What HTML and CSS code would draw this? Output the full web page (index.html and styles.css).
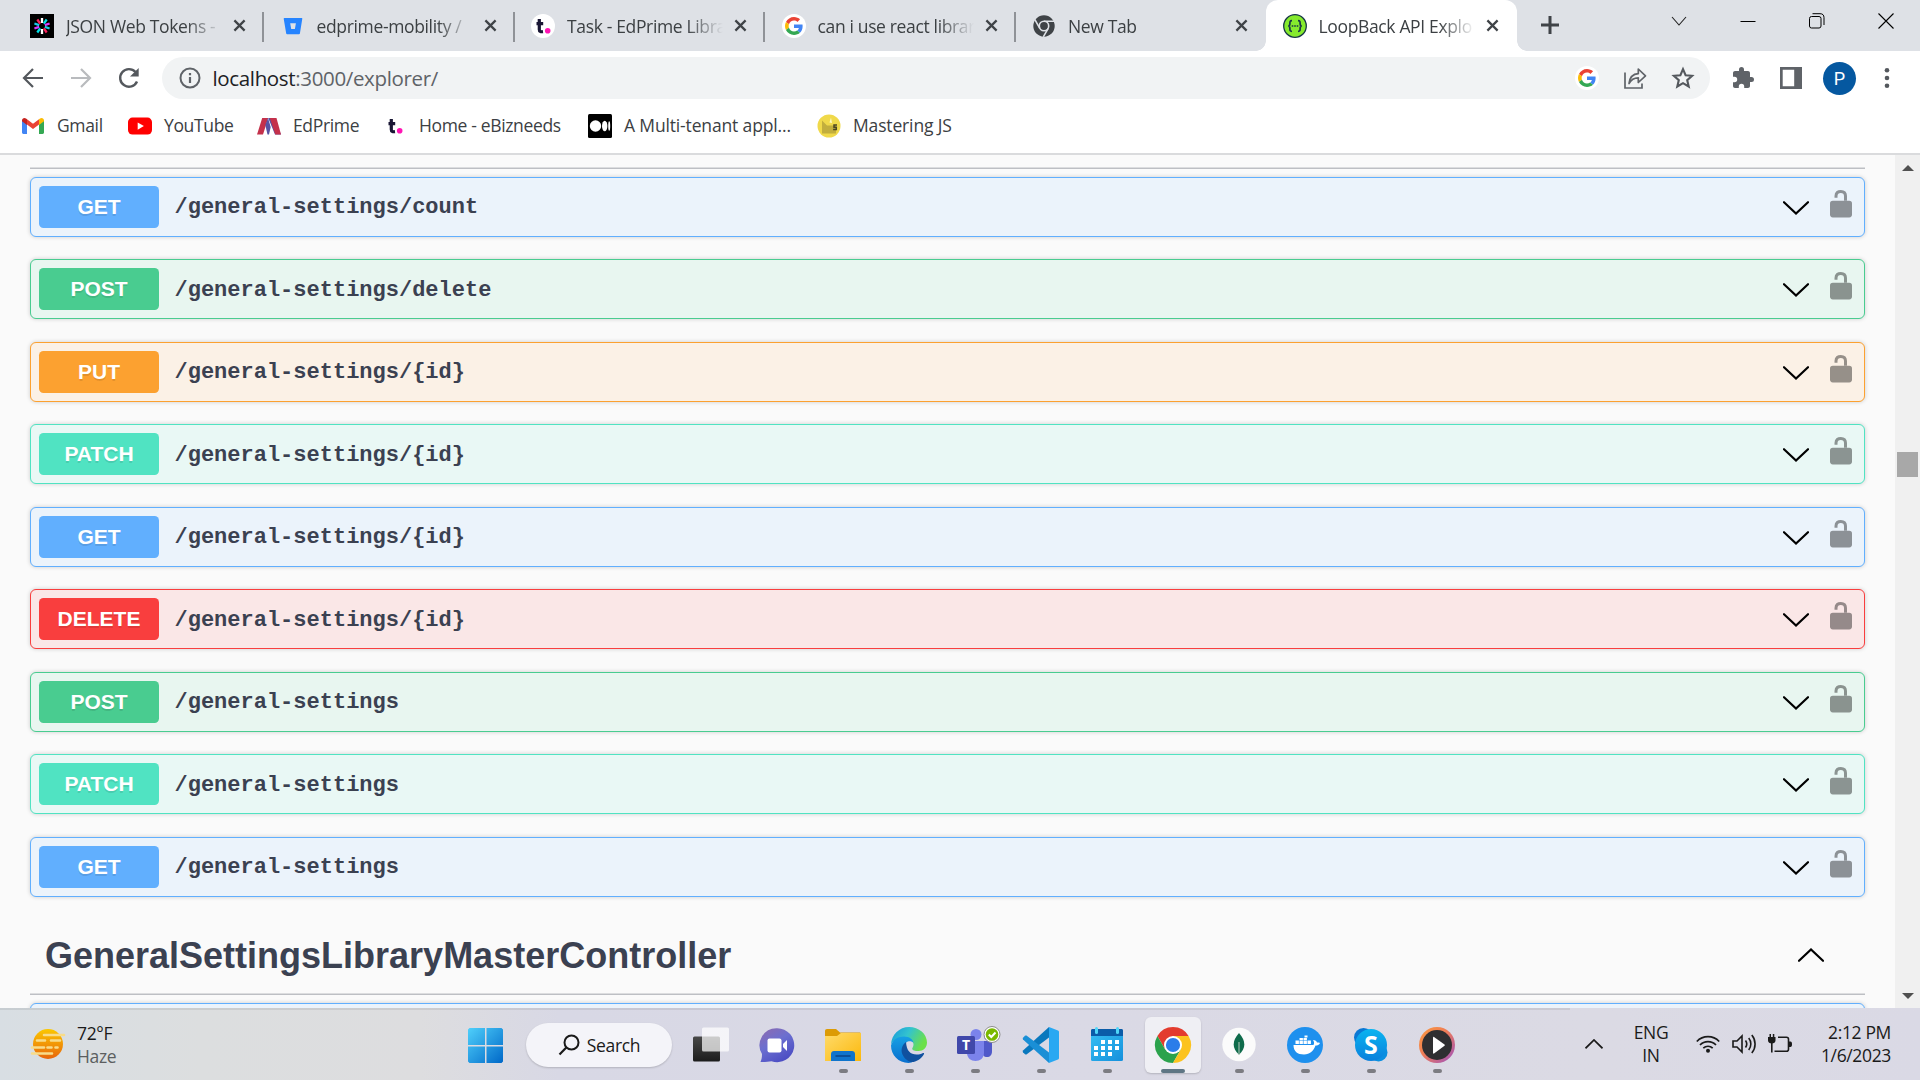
FILE: index.html
```html
<!DOCTYPE html>
<html lang="en">
<head>
<meta charset="utf-8">
<title>LoopBack API Explorer</title>
<link rel="stylesheet" href="styles.css">
</head>
<body>
<svg class="defs" width="0" height="0" aria-hidden="true">
  <defs>
    <linearGradient id="g-win" x1="0" y1="0" x2="1" y2="1"><stop offset="0" stop-color="#4fd0fb"/><stop offset="1" stop-color="#0068c8"/></linearGradient>
    <linearGradient id="g-sun" x1="0" y1="0" x2="0" y2="1"><stop offset="0" stop-color="#fbc800"/><stop offset="1" stop-color="#e8650c"/></linearGradient>
    <linearGradient id="g-dark" x1="0" y1="0" x2="0" y2="1"><stop offset="0" stop-color="#484848"/><stop offset="1" stop-color="#1c1c1c"/></linearGradient>
    <linearGradient id="g-chat" x1="0" y1="0" x2=".6" y2="1"><stop offset="0" stop-color="#8f6aae"/><stop offset=".5" stop-color="#6b6fd0"/><stop offset="1" stop-color="#4d4ec4"/></linearGradient>
    <linearGradient id="g-folder" x1="0" y1="0" x2="1" y2="1"><stop offset="0" stop-color="#ffdb6b"/><stop offset="1" stop-color="#fbb80c"/></linearGradient>
    <linearGradient id="g-edge" x1="0" y1="0" x2="1" y2=".4"><stop offset="0" stop-color="#1597dc"/><stop offset=".5" stop-color="#33c3cf"/><stop offset="1" stop-color="#6be04a"/></linearGradient>
    <linearGradient id="g-edge2" x1="0" y1="0" x2="0" y2="1"><stop offset="0" stop-color="#16a0e4"/><stop offset="1" stop-color="#0a6fce"/></linearGradient>
    <linearGradient id="g-cal" x1="0" y1="0" x2="1" y2="1"><stop offset="0" stop-color="#35bdf2"/><stop offset="1" stop-color="#1590dc"/></linearGradient>
    <linearGradient id="g-skype" x1="0" y1="0" x2="0" y2="1"><stop offset="0" stop-color="#0ab4f0"/><stop offset="1" stop-color="#0a80dc"/></linearGradient>
    <linearGradient id="g-media" x1="0" y1="0" x2="1" y2="1"><stop offset="0" stop-color="#fb9a3c"/><stop offset=".45" stop-color="#ee7b58"/><stop offset="1" stop-color="#9a4fc4"/></linearGradient>
    <symbol id="close" viewBox="0 0 14 14"><path d="M1.5 1.5l11 11M12.5 1.5l-11 11" stroke="#3f4347" stroke-width="2.4" fill="none"/></symbol>
    <symbol id="down" viewBox="0 0 26 14"><path d="M1 1.2l12 11.3L25 1.2" stroke="#000" stroke-width="2.2" fill="none" stroke-linecap="round"/></symbol>
    <symbol id="lock" viewBox="0 0 22 28"><path d="M6 7.800V6C6 2.700 8 1.500 10.800 1.500s4.700 1.500 4.700 4.500v4.800" stroke="#000" stroke-width="3" fill="none"/><rect x="0" y="10.800" width="22" height="16.600" rx="2.800"/></symbol>
    <symbol id="google" viewBox="0 0 48 48"><path fill="#EA4335" d="M24 9.500c3.540 0 6.710 1.220 9.210 3.600l6.850-6.850C35.900 2.380 30.470 0 24 0 14.620 0 6.510 5.380 2.560 13.220l7.980 6.190C12.430 13.720 17.740 9.500 24 9.500z"/><path fill="#4285F4" d="M46.980 24.550c0-1.570-.150-3.090-.380-4.550H24v9.020h12.940c-.580 2.960-2.260 5.480-4.780 7.180l7.730 6c4.510-4.180 7.090-10.360 7.090-17.650z"/><path fill="#FBBC05" d="M10.530 28.590c-.480-1.450-.760-2.990-.760-4.590s.270-3.140.760-4.590l-7.980-6.190C.920 16.460 0 20.120 0 24c0 3.880.920 7.540 2.560 10.780l7.970-6.190z"/><path fill="#34A853" d="M24 48c6.480 0 11.930-2.130 15.890-5.810l-7.730-6c-2.150 1.450-4.920 2.300-8.160 2.300-6.260 0-11.570-4.220-13.470-9.910l-7.980 6.190C6.510 42.620 14.620 48 24 48z"/></symbol>
    <symbol id="tdot" viewBox="0 0 24 24"><path d="M8.300 5v10.500c0 2 1.200 2.500 3.700 2.200M5.500 9.600h6.700" stroke="#191634" stroke-width="3.200" fill="none"/><circle cx="16.700" cy="16.800" r="2.800" fill="#ff15b4"/></symbol>
  </defs>
</svg>

<header class="browser">
  <div class="tabstrip">
    <div class="tabs">
      <div class="tab">
        <svg class="fav" viewBox="0 0 24 24"><rect width="24" height="24"/><g stroke-width="2.300"><path d="M12 4v5M12 15v5" stroke="#fff"/><path d="M16.700 5.500L13.800 9.600M10.200 14.400l-2.900 4.100" stroke="#00e0e8"/><path d="M19.600 9.500l-4.800 1.600M9.200 12.900l-4.800 1.600" stroke="#d63aff"/><path d="M19.600 14.500l-4.800-1.600M9.200 11.100L4.400 9.500" stroke="#18c8e8"/><path d="M16.700 18.500l-2.900-4.100M10.200 9.600L7.300 5.500" stroke="#fb1f5a"/></g></svg>
        <span class="title">JSON Web Tokens -</span><svg class="x"><use href="#close"/></svg>
      </div>
      <div class="tab">
        <svg class="fav" viewBox="0 0 24 24"><path d="M3.400 4h17.200c.5 0 .8.400.7.800l-2.400 14.800c-.1.500-.4.700-.9.700H6.100c-.5 0-.8-.3-.9-.7L2.700 4.800c-.1-.4.200-.8.700-.8zM9.200 9.300l1 5.700h3.700l1-5.700z" fill="#2684ff" fill-rule="evenodd"/></svg>
        <span class="title">edprime-mobility /</span><svg class="x"><use href="#close"/></svg>
      </div>
      <div class="tab">
        <svg class="fav" viewBox="0 0 24 24"><circle cx="12" cy="12" r="12" fill="#fff"/><use href="#tdot"/></svg>
        <span class="title">Task - EdPrime Libra</span><svg class="x"><use href="#close"/></svg>
      </div>
      <div class="tab">
        <svg class="fav" viewBox="0 0 24 24"><circle cx="12" cy="12" r="12" fill="#fff"/><use href="#google" x="3" y="3" width="18" height="18"/></svg>
        <span class="title">can i use react librar</span><svg class="x"><use href="#close"/></svg>
      </div>
      <div class="tab last">
        <svg class="fav" viewBox="0 0 24 24"><circle cx="12" cy="12" r="10.700" fill="#3f4347"/><circle cx="12" cy="12" r="4.700" fill="none" stroke="#dee1e6" stroke-width="1.600"/><path d="M12 7.200h10M7.800 14.400L2.900 5.700M16.200 14.400l-4.900 8.500" stroke="#dee1e6" stroke-width="1.600"/></svg>
        <span class="title">New Tab</span><svg class="x"><use href="#close"/></svg>
      </div>
      <div class="tab active">
        <svg class="fav" viewBox="0 0 24 24"><circle cx="12" cy="12" r="11.300" fill="#85ea2d" stroke="#173647" stroke-width="1.300"/><path d="M9 6.700c-2.200 0-2.100 1-2.100 2.900 0 1.500-.3 2.400-1.700 2.400 1.400 0 1.700.9 1.700 2.400 0 1.900-.1 2.900 2.100 2.900M15 6.700c2.200 0 2.100 1 2.100 2.900 0 1.500.3 2.400 1.700 2.400-1.400 0-1.700.9-1.700 2.400 0 1.900.1 2.900-2.100 2.900" fill="none" stroke="#173647" stroke-width="1.700"/><path d="M8.700 12h1.600M11.200 12h1.600M13.700 12h1.600" stroke="#173647" stroke-width="1.600"/></svg>
        <span class="title">LoopBack API Explo</span><svg class="x"><use href="#close"/></svg>
      </div>
    </div>
    <svg class="newtab" viewBox="0 0 18 18"><path d="M9 0v18M0 9h18" stroke="#3f4347" stroke-width="3"/></svg>
    <div class="winctl">
      <svg viewBox="0 0 16 16"><path d="M1 4l7 8 7-8" fill="none" stroke="#222" stroke-width="1.100"/></svg>
      <svg viewBox="0 0 16 16"><path d="M.5 8.500h15" stroke="#000"/></svg>
      <svg viewBox="0 0 16 16"><rect x=".5" y="3.500" width="11.500" height="11.500" rx="2" fill="none" stroke="#000"/><path d="M3.500.700H11a4 4 0 0 1 4 4V12" fill="none" stroke="#000"/></svg>
      <svg viewBox="0 0 16 16"><path d="M.5.500l15 15M15.500.500l-15 15" stroke="#000" stroke-width="1.100"/></svg>
    </div>
  </div>

  <div class="toolbar">
    <div class="nav">
      <svg viewBox="0 0 24 24"><path d="M22 12H3.500M12 3l-9 9 9 9" fill="none" stroke="#54585d" stroke-width="2.200"/></svg>
      <svg viewBox="0 0 24 24"><path d="M2 12h18.500M12 3l9 9-9 9" fill="none" stroke="#b9bbbe" stroke-width="2.200"/></svg>
      <svg viewBox="0 0 24 24"><path d="M20 15.500A8.800 8.800 0 1 1 18.500 6" fill="none" stroke="#54585d" stroke-width="2.400"/><path d="M21.700 2v8.500H13z" fill="#54585d"/></svg>
    </div>
    <div class="omnibox">
      <svg class="info" viewBox="0 0 22 22"><circle cx="11" cy="11" r="9.500" fill="none" stroke="#5f6368" stroke-width="2"/><path d="M11 10v6M11 6v2.200" stroke="#5f6368" stroke-width="2.200"/></svg>
      <span class="url"><b>localhost</b>:3000/explorer/</span>
      <div class="omni-icons">
        <svg viewBox="0 0 24 24"><circle cx="12" cy="12" r="12" fill="#fff"/><use href="#google" x="3" y="3" width="18" height="18"/></svg>
        <svg viewBox="0 0 24 24"><path d="M2 6.500V22h17v-4.500" fill="none" stroke="#5f6368" stroke-width="1.700"/><path d="M6 17.500c.8-6.500 4-9.500 9.300-9.800V3l7.200 6.800-7.200 6.700v-4.700c-4.300 0-7.200 1.700-9.300 5.700z" fill="none" stroke="#5f6368" stroke-width="1.700" stroke-linejoin="round"/></svg>
        <svg viewBox="0 0 24 24"><path d="M12 3.200l2.600 6 6.500.6-4.900 4.300 1.500 6.400-5.700-3.400-5.700 3.400 1.500-6.400-4.900-4.300 6.500-.6z" fill="none" stroke="#54585d" stroke-width="2.100"/></svg>
      </div>
    </div>
    <div class="actions">
      <svg viewBox="0 0 24 24"><path d="M20.500 11H19V7c0-1.100-.9-2-2-2h-4V3.500a2.500 2.500 0 0 0-5 0V5H4c-1.100 0-2 .9-2 2v3.800h1.500a2.700 2.700 0 0 1 0 5.400H2V20c0 1.100.9 2 2 2h3.800v-1.500a2.700 2.700 0 0 1 5.400 0V22H17c1.100 0 2-.9 2-2v-4h1.500a2.500 2.500 0 0 0 0-5z" fill="#5f6368"/></svg>
      <svg viewBox="0 0 24 24"><path d="M1 1h22v22H1zM3.700 3.700v16.600h11.500V3.700z" fill="#5f6368" fill-rule="evenodd"/></svg>
      <span class="avatar">P</span>
      <svg viewBox="0 0 24 24" fill="#54585d"><circle cx="12" cy="4.200" r="2.300"/><circle cx="12" cy="12" r="2.300"/><circle cx="12" cy="19.800" r="2.300"/></svg>
    </div>
  </div>

  <div class="bookmarks">
    <div class="bm"><svg viewBox="0 0 24 24"><path d="M1 6v12.500c0 .8.600 1.400 1.400 1.400H6V10z" fill="#4285f4"/><path d="M23 6v12.500c0 .8-.6 1.400-1.400 1.400H18V10z" fill="#34a853"/><path d="M6 10.500V5.200l6 4.500 6-4.500v5.300L12 15z" fill="#ea4335"/><path d="M1 6.500C1 4 3.500 3.300 5 4.500l1 .7v5.700L1 7.300z" fill="#c5221f"/><path d="M23 6.500c0-2.500-2.500-3.200-4-2l-1 .7v5.700l5-3.600z" fill="#fbbc04"/></svg><span>Gmail</span></div>
    <div class="bm"><svg viewBox="0 0 24 24"><rect y="3.600" width="24" height="17" rx="4.500" fill="#f00"/><path d="M9.700 8.500v7.200l6.200-3.600z" fill="#fff"/></svg><span>YouTube</span></div>
    <div class="bm"><svg viewBox="0 0 24 24"><path d="M0 20.500L5.200 4h6L6 20.500z" fill="#c4314b"/><path d="M8.300 11L11 4l2.700 9-1.700 7.500h-1.500z" fill="#5753a4"/><path d="M11.200 4h5.600L24 20.500h-6z" fill="#5753a4"/><path d="M12.800 4h6.700L24 20.500h-5.700z" fill="#c4314b"/></svg><span>EdPrime</span></div>
    <div class="bm"><svg viewBox="0 0 24 24"><use href="#tdot"/></svg><span>Home - eBizneeds</span></div>
    <div class="bm wide"><svg viewBox="0 0 24 24"><rect width="24" height="24" rx="1.500"/><g fill="#fff"><circle cx="7.500" cy="12" r="5.700"/><ellipse cx="16.700" cy="12" rx="2.700" ry="5.300"/><ellipse cx="21.200" cy="12" rx="1" ry="4.800"/></g></svg><span>A Multi-tenant appl...</span></div>
    <div class="bm wide"><svg viewBox="0 0 24 24"><circle cx="12" cy="12" r="11.500" fill="#f0d94a"/><path d="M5 6.500l5 5h9v8H5z" fill="#c2ae3d"/><path d="M12.500 8.500l1.500-5 1 5.500z" fill="#fff8c0"/><path d="M20 11h-3v2.200h2.300v2.300h-3.200" fill="none" stroke="#4c4624" stroke-width="1.500"/></svg><span>Mastering JS</span></div>
  </div>
</header>

<div class="viewport">
  <main class="api">
    <div class="rule"></div>
    <div class="ops">
      <div class="op get"><span class="method">GET</span><span class="path">/general-settings/count</span><svg class="chev"><use href="#down"/></svg><svg class="lock"><use href="#lock"/></svg></div>
      <div class="op post"><span class="method">POST</span><span class="path">/general-settings/delete</span><svg class="chev"><use href="#down"/></svg><svg class="lock"><use href="#lock"/></svg></div>
      <div class="op put"><span class="method">PUT</span><span class="path">/general-settings/{id}</span><svg class="chev"><use href="#down"/></svg><svg class="lock"><use href="#lock"/></svg></div>
      <div class="op patch"><span class="method">PATCH</span><span class="path">/general-settings/{id}</span><svg class="chev"><use href="#down"/></svg><svg class="lock"><use href="#lock"/></svg></div>
      <div class="op get"><span class="method">GET</span><span class="path">/general-settings/{id}</span><svg class="chev"><use href="#down"/></svg><svg class="lock"><use href="#lock"/></svg></div>
      <div class="op delete"><span class="method">DELETE</span><span class="path">/general-settings/{id}</span><svg class="chev"><use href="#down"/></svg><svg class="lock"><use href="#lock"/></svg></div>
      <div class="op post"><span class="method">POST</span><span class="path">/general-settings</span><svg class="chev"><use href="#down"/></svg><svg class="lock"><use href="#lock"/></svg></div>
      <div class="op patch"><span class="method">PATCH</span><span class="path">/general-settings</span><svg class="chev"><use href="#down"/></svg><svg class="lock"><use href="#lock"/></svg></div>
      <div class="op get"><span class="method">GET</span><span class="path">/general-settings</span><svg class="chev"><use href="#down"/></svg><svg class="lock"><use href="#lock"/></svg></div>
    </div>
    <div class="section"><h3>GeneralSettingsLibraryMasterController</h3><svg class="chev up"><use href="#down"/></svg></div>
    <div class="rule"></div>
    <div class="ops"><div class="op get"></div></div>
  </main>
  <div class="scrollbar">
    <svg viewBox="0 0 12 6"><path d="M0 6l6-6 6 6z" fill="#505050"/></svg>
    <div class="track"><div class="thumb"></div></div>
    <svg viewBox="0 0 12 6"><path d="M0 0l6 6 6-6z" fill="#505050"/></svg>
  </div>
</div>

<footer class="taskbar">
  <div class="weather">
    <svg viewBox="0 0 36 32"><circle cx="18" cy="16" r="15" fill="url(#g-sun)"/><g stroke="#f8dc8a" stroke-width="2.600" stroke-linecap="round"><path d="M14 7h20M7 12.500h8M21 12.500h9M2 19.500h12M17.500 19.500h4M25.500 19.500h2M2 25.500h20"/></g></svg>
    <div class="lines"><span>72°F</span><span class="dim">Haze</span></div>
  </div>
  <div class="apps">
    <div class="app start"><svg viewBox="0 0 36 36"><path d="M1.500 0H17v17H0V1.500zM18.500 0h15L35 1.500V17H18.500zM0 18.500h17V35H1.500L0 33.500zM18.500 18.500H35v15L33.500 35h-15z" fill="url(#g-win)"/></svg></div>
    <div class="search"><svg viewBox="0 0 22 22"><circle cx="13.500" cy="8.500" r="7" fill="none" stroke="#1a1a1a" stroke-width="2"/><path d="M8.300 13.500L1.500 20.500" stroke="#1a1a1a" stroke-width="2.200"/></svg><span>Search</span></div>
    <div class="app"><svg viewBox="0 0 36 36"><rect y="9.500" width="27" height="25" rx="1.500" fill="url(#g-dark)"/><rect x="9" y=".5" width="27" height="24" rx="1.500" fill="#fff" fill-opacity=".72"/></svg></div>
    <div class="app"><svg viewBox="0 0 36 36"><path d="M18 1.200a17 17 0 1 1-5.500 33c-3 .6-6 .8-11 .8 1.200-2.500 1.500-5 1.500-8A17 17 0 0 1 18 1.200z" fill="url(#g-chat)"/><rect x="8.500" y="11.500" width="14" height="14" rx="2" fill="#fff"/><path d="M24 17l4-4v11l-4-4z" fill="#fff"/></svg></div>
    <div class="app run"><svg viewBox="0 0 36 36"><path d="M0 4c0-1.200.8-2 2-2h9l4 3.500h19.500c.8 0 1.500.7 1.500 1.500v6H0z" fill="#dc9b05"/><path d="M0 9h12l4-3h20v28H0z" fill="url(#g-folder)"/><path d="M6 34V27c0-2 1.300-3 3-3h18c1.700 0 3 1 3 3v7z" fill="#0f74cc"/><path d="M10.500 29h15" stroke="#0a4f98" stroke-width="2"/></svg></div>
    <div class="app run"><svg viewBox="0 0 36 36"><path d="M0 17.500C.5 7.500 8.500 0 18 0c10 0 18 7 18 15.500 0 5-3.700 8.500-8.500 8.500-3.500 0-6.300-.8-6.300-2.300 0-1 1.300-1.700 1.300-4.200 0-3.800-4-7.300-9.500-7.300C7 10.200 2.500 13.500 0 17.500z" fill="url(#g-edge)"/><path d="M0 18.500C1.500 12.500 7 9.400 13 9.400c5.500 0 9 2.800 9.500 6.600-2-3-9-2.500-9.500 4.500-.4 6 4 12 10 13.500C21.500 35.300 19.500 36 17.500 36 7.500 35.700 0 28.300 0 18.500z" fill="url(#g-edge2)"/><path d="M15 15c-4 3-5.500 8-3.500 12.500C13.500 32 18 35.500 22.500 35c4.500-1 9-4.500 10.500-8 .3-1-.3-1.300-1-.9-2.500 1.300-4.500 1.600-6.500 1.500-6-.2-10-3.600-10.500-12.600z" fill="#10519f"/></svg></div>
    <div class="app run teams"><svg viewBox="0 0 44 36"><circle cx="19" cy="7.500" r="5.500" fill="#7b83eb"/><path d="M25 14h10v10c0 4-2 6-5 6s-5-2-5-6z" fill="#5059c9"/><circle cx="31" cy="9" r="4" fill="#5059c9"/><path d="M10 14h17v12c0 5-4 8-8.500 8S10 31 10 26z" fill="#7b83eb"/><rect y="9" width="18" height="18" rx="1.500" fill="#4048aa"/><circle cx="35" cy="7.500" r="8" fill="#fff" stroke="#8b8b8b"/><circle cx="35" cy="7.500" r="6.300" fill="#7ab800"/><path d="M31.800 7.500l2.500 2.500 4.200-4.500" stroke="#fff" stroke-width="2" fill="none"/><text x="9" y="23" class="glyph" font-size="14">T</text></svg></div>
    <div class="app run"><svg viewBox="0 0 36 36"><path d="M26 0L0 23.500c-.4.500-.4 1.300 0 1.800l2 1.900c.6.500 1.200.5 1.800.1L26 10.500z" fill="#0a78bd"/><path d="M26 36L0 12.500c-.4-.5-.4-1.300 0-1.800l2-1.900c.6-.5 1.200-.5 1.800-.1L26 25.500z" fill="#1a8fd6"/><path d="M26 0l9 3.500c.6.3 1 .8 1 1.500v26c0 .7-.4 1.200-1 1.500L26 36z" fill="#29a8f2"/></svg></div>
    <div class="app run"><svg viewBox="0 0 36 36"><rect x="2" y="7" width="32" height="27" rx="1.500" fill="url(#g-cal)"/><path d="M2 3.500C2 2.500 2.700 2 3.500 2h29c.8 0 1.500.5 1.500 1.500V9H2z" fill="#0b5ca8"/><g fill="#50d6f8"><rect x="6" y="0" width="3" height="7" rx="1.500"/><rect x="27" y="0" width="3" height="7" rx="1.500"/></g><g fill="#fff"><path d="M12 13h4v4h-4zM19 13h4v4h-4zM26 13h4v4h-4zM5 19h4v4H5zM12 19h4v4h-4zM19 19h4v4h-4zM26 19h4v4h-4zM5 25h4v4H5zM12 25h4v4h-4zM19 25h4v4h-4z"/></g></svg></div>
    <div class="app run current"><svg viewBox="0 0 36 36"><path d="M18 9h15.600A18 18 0 0 0 2.400 9l7.800 13.500z" fill="#e33b2e"/><path d="M10.200 22.500L2.400 9A18 18 0 0 0 18 36l7.800-13.500z" fill="#2ba24c"/><path d="M25.800 22.500L18 36A18 18 0 0 0 33.600 9H18z" fill="#fcc31e"/><circle cx="18" cy="18" r="9" fill="#fff"/><circle cx="18" cy="18" r="7.100" fill="#2b7de9"/></svg></div>
    <div class="app run"><svg viewBox="0 0 36 36"><circle cx="18" cy="17.500" r="16.700" fill="#fbfbfb"/><path d="M18 6c3.500 4 5.300 7.500 5.300 11.500 0 4-2 6.800-4.700 9.500h-1.200c-2.700-2.700-4.700-5.500-4.700-9.500C12.700 13.500 14.500 10 18 6z" fill="#0f6b4b"/><path d="M18 15v13" stroke="#9bb9aa" stroke-width="1.200"/></svg></div>
    <div class="app run"><svg viewBox="0 0 36 36"><circle cx="18" cy="18" r="18" fill="#1e90ee"/><path d="M6.500 18h20c1-1.500.6-3.500-.5-5 2.500 0 3.500 1 4 2.500 1-.3 2.500 0 3 .5-.8 2-2.500 2.500-4.500 2.500C26.500 24 23 27.500 17 27.500c-6.500 0-10.500-3-10.500-9.500z" fill="#fff"/><path d="M8.500 13.500h3.400v3.500H8.500zM12.500 13.500h3.400v3.500h-3.400zM16.500 13.500h3.400v3.500h-3.400zM20.500 13.500h3.400v3.500h-3.400zM12.500 11h3.400v2h-3.400zM16.500 11h3.400v2h-3.400zM17.500 8.500h3v2h-3z" fill="#fff"/></svg></div>
    <div class="app run"><svg viewBox="0 0 36 36"><circle cx="10.500" cy="10.500" r="9.500" fill="#0a78d4"/><circle cx="25.500" cy="25.500" r="9" fill="#0a8fe0"/><circle cx="18" cy="18" r="16" fill="url(#g-skype)"/><text x="18" y="26.500" class="glyph" font-size="25">S</text></svg></div>
    <div class="app run"><svg viewBox="0 0 36 36"><circle cx="18" cy="18" r="18" fill="url(#g-media)"/><circle cx="18" cy="18" r="15" fill="#2f2f31"/><path d="M14 10.500v15.500c0 .6.500.8 1 .5l10.500-7.700c.5-.4.500-.8 0-1.200L15 10c-.5-.3-1-.1-1 .5z" fill="#fff"/></svg></div>
  </div>
  <div class="tray">
    <svg class="t-chev" viewBox="0 0 18 10"><path d="M.5 9.300L9 1l8.500 8.300" fill="none" stroke="#1a1a1a" stroke-width="1.700"/></svg>
    <div class="lines lang"><span>ENG</span><span>IN</span></div>
    <div class="status">
      <svg viewBox="0 0 24 20" fill="none" stroke="#1a1a1a" stroke-width="1.700"><path d="M.8 7.500a15.500 15.500 0 0 1 22.400 0M4 11a11 11 0 0 1 16 0M7.300 14.200a6.600 6.600 0 0 1 9.400 0"/><circle cx="12" cy="16.800" r="2" fill="#1a1a1a" stroke="none"/></svg>
      <svg viewBox="0 0 24 20" fill="none" stroke="#1a1a1a" stroke-width="1.600"><path d="M1 7h4l5-5v16l-5-5H1zM13.500 6.500a6 6 0 0 1 0 7M16.700 4a9.500 9.500 0 0 1 0 12M19.800 1a14 14 0 0 1 0 18"/></svg>
      <svg viewBox="0 0 24 20" fill="none" stroke="#1a1a1a" stroke-width="1.600"><path d="M10 3.300h8.500c1.400 0 2 .7 2 2v10c0 1.300-.6 2-2 2H6.500M3.800 9v9.500"/><path d="M0 3h7.500v3.500c0 2-1.600 3-3.700 3S0 8.500 0 6.500zM1.500 0h1.500v3H1.500zM4.800 0h1.500v3H4.800zM20.500 7.500h2c1 0 1.500 1 1.500 2.800s-.5 2.700-1.500 2.700h-2z" fill="#1a1a1a" stroke="none"/></svg>
    </div>
    <div class="lines clock"><span>2:12 PM</span><span>1/6/2023</span></div>
  </div>
</footer>
</body>
</html>
```
FILE: styles.css
```css
* { box-sizing: border-box; }
body {
  margin: 0;
  width: 1920px;
  height: 1080px;
  overflow: hidden;
  display: flex;
  flex-direction: column;
  font-family: "Open Sans", "Noto Sans", sans-serif;
  background: #fafafa;
}
svg { display: block; flex: none; }
.defs { position: absolute; }

/* browser chrome */
.browser { flex: none; height: 155px; background: #fff; border-bottom: 2px solid #dadbdd; }
.tabstrip { height: 51px; background: #dee1e6; display: flex; padding-left: 13.5px; }
.tabs { display: grid; grid-template-columns: repeat(6, 250.5px); }
.tab {
  display: flex;
  align-items: center;
  padding: 0 17px 0 16.5px;
  background: linear-gradient(#8f9297, #8f9297) right 12px / 2px 30px no-repeat;
}
.tab.last { background: none; }
.tab.active { background: #fff; border-radius: 12px 12px 0 0; position: relative; }
.tab.active::before, .tab.active::after {
  content: "";
  position: absolute;
  bottom: 0;
  width: 10px;
  height: 10px;
}
.tab.active::before { left: -10px; background: radial-gradient(circle at 0 0, transparent 9.5px, #fff 10px); }
.tab.active::after { right: -10px; background: radial-gradient(circle at 100% 0, transparent 9.5px, #fff 10px); }
.fav { width: 24px; height: 24px; margin-right: 12px; }
.title {
  width: 156px;
  white-space: nowrap;
  font-size: 17.5px;
  letter-spacing: -.35px;
  color: #3c4043;
  -webkit-mask-image: linear-gradient(90deg, #000 120px, transparent 156px);
  mask-image: linear-gradient(90deg, #000 120px, transparent 156px);
}
.x { width: 13px; height: 13px; margin-left: 11px; }
.newtab { width: 18px; height: 18px; margin: 16px 0 0 24px; }
.winctl { display: flex; gap: 53px; margin: 13px 0 0 112.500px; height: 16px; }
.winctl svg { width: 16px; height: 16px; }

.toolbar { height: 54px; display: flex; align-items: center; }
.nav { display: flex; gap: 24px; padding-left: 21px; width: 162px; }
.nav svg { width: 24px; height: 24px; }
.omnibox {
  width: 1548px;
  height: 42px;
  border-radius: 21px;
  background: #f1f3f4;
  display: flex;
  align-items: center;
  padding: 0 15px 0 16.500px;
}
.info { width: 22px; height: 22px; margin-right: 12px; }
.url { font-size: 20.5px; letter-spacing: -.35px; color: #5f6368; flex: 1; }
.url b { font-weight: 400; color: #202124; }
.omni-icons { display: flex; gap: 24px; }
.omni-icons svg, .actions svg { width: 24px; height: 24px; }
.actions { display: flex; align-items: center; padding-left: 21px; }
.actions svg:nth-child(2) { margin-left: 24px; }
.actions svg:last-child { margin-left: 19px; }
.avatar {
  width: 33px;
  height: 33px;
  margin-left: 20px;
  border-radius: 50%;
  background: #0558a0;
  color: #fff;
  font: 18px/33px Roboto, sans-serif;
  text-align: center;
}

.bookmarks {
  height: 42px;
  padding-left: 21px;
  display: grid;
  grid-template-columns: 107px 129px 126px 205px 229px 200px;
  align-items: center;
  font-size: 17.5px;
  letter-spacing: -.35px;
  color: #3c4043;
  white-space: nowrap;
}
.bm { display: flex; align-items: center; gap: 12px; }
.bm svg { width: 24px; height: 24px; }
.bm span { margin-top: -2px; }
.wide { letter-spacing: -.15px; }

/* API explorer */
.viewport { flex: 1; min-height: 0; display: flex; overflow: hidden; }
.api { flex: 1; padding: 12px 30px 0; }
.rule { height: 2px; background: linear-gradient(#dcdddf 50%, #bdbfc4 50%); }
.ops { padding-top: 7.900px; display: grid; row-gap: 22.500px; }
.op {
  --c: #61affe;
  --bg: #ebf3fb;
  height: 60px;
  display: flex;
  align-items: center;
  padding: 0 12px 0 8px;
  border: 1px solid var(--c);
  border-radius: 6px;
  background: var(--bg);
  box-shadow: 0 0 4.500px rgba(0, 0, 0, .19);
}
.post { --c: #49cc90; --bg: #e8f6f0; }
.put { --c: #fca130; --bg: #fbf1e6; }
.patch { --c: #50e3c2; --bg: #e9f8f5; }
.delete { --c: #f93e3e; --bg: #fae7e7; }
.method {
  width: 120px;
  height: 42px;
  border-radius: 4.500px;
  background: var(--c);
  color: #fff;
  font: bold 21px/42px "Liberation Sans", Arial, sans-serif;
  text-align: center;
  text-shadow: 0 1.500px 0 rgba(0, 0, 0, .1);
}
.path {
  flex: 1;
  padding: 3px 0 0 15.500px;
  color: #3b4151;
  font: bold 22px/1 "Liberation Mono", monospace;
}
.chev { width: 26px; height: 14px; margin-top: 2px; }
.lock { width: 22px; height: 28px; margin: -6px 0 0 21px; opacity: .4; }
.section { height: 96.100px; display: flex; align-items: center; padding: 20px 41px 0 15px; }
.section h3 {
  flex: 1;
  margin: 1px 0 0;
  color: #3b4151;
  font: bold 36px/1.2 "Liberation Sans", Arial, sans-serif;
}
.up { transform: rotate(180deg); margin-top: 0; }

.scrollbar {
  width: 25px;
  background: #f0f0f0;
  display: flex;
  flex-direction: column;
  align-items: center;
  padding: 10px 0 9px;
}
.scrollbar svg { width: 12px; height: 6px; }
.track { flex: 1; width: 21px; padding-top: 281px; }
.thumb { height: 25px; background: #a8a8a8; }

/* taskbar */
.taskbar {
  flex: none;
  height: 72px;
  display: flex;
  align-items: center;
  color: #1a1a1a;
  font-size: 17.5px;
  letter-spacing: -.35px;
  background:
    linear-gradient(rgba(0, 0, 0, .08), rgba(0, 0, 0, .08)) 0 0 / 1570px 2px no-repeat,
    linear-gradient(90deg, #d8dee3 0, #dcdedf 200px, #dddddf 420px, #d8d8e5 560px, #dad9e5 1100px, #dbdae4 1600px, #dad9e5 100%);
}
.lines { display: flex; flex-direction: column; line-height: 23.500px; }
.weather { width: 453px; display: flex; align-items: center; gap: 11px; padding: 2px 0 0 30px; }
.weather svg { width: 36px; height: 32px; margin-top: -3px; }
.dim { color: #5c5e60; }
.apps { display: flex; align-items: center; height: 72px; width: 1132px; }
.app { width: 66px; height: 56px; margin-top: 1px; padding-top: 10px; display: flex; flex-direction: column; align-items: center; }
.app svg { width: 36px; height: 36px; overflow: visible; }
.app.start { padding-top: 11px; }
.app.teams svg { width: 44px; margin-left: 8px; }
.run::after { content: ""; width: 9px; height: 5px; border-radius: 2.500px; margin-top: 6px; background: #7c7c82; }
.current {
  width: 56px;
  margin: 1px 5px 0;
  border-radius: 6px;
  background: #efeff4;
  box-shadow: 0 1px 2px rgba(0, 0, 0, .18);
}
.current::after { width: 24px; height: 4px; background: #5f7684; }
.search {
  width: 146px;
  height: 44px;
  margin: 2px 6px 0 7px;
  border-radius: 22px;
  background: #f4f4f9;
  box-shadow: 0 1px 2px rgba(0, 0, 0, .18);
  display: flex;
  align-items: center;
  justify-content: center;
  gap: 7px;
}
.search svg { width: 22px; height: 22px; }
.glyph { font-family: "Open Sans", sans-serif; font-weight: 700; fill: #fff; text-anchor: middle; letter-spacing: 0; }
.tray { flex: 1; display: flex; align-items: center; }
.t-chev { width: 18px; height: 10px; }
.lang { margin-left: 28px; width: 40px; text-align: center; }
.status { display: flex; gap: 12px; margin-left: 25px; }
.status svg { width: 24px; height: 20px; }
.clock { flex: 1; text-align: right; padding-right: 29px; }
```
